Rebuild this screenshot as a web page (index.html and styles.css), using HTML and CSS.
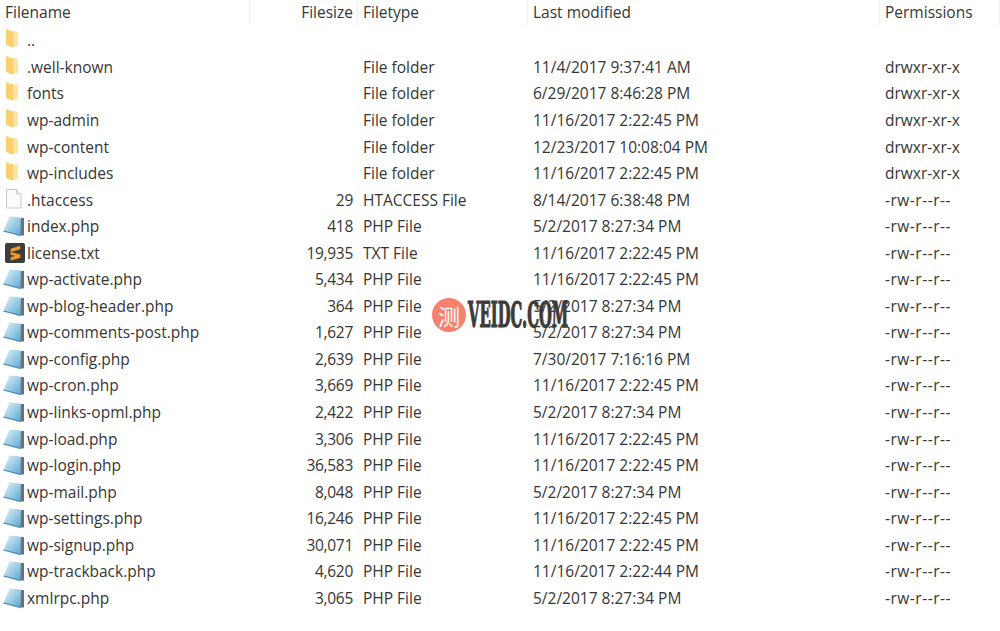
FILE: index.html
```html
<!DOCTYPE html>
<html>
<head>
  <title>Site files</title>
  <link rel="stylesheet" href="styles.css">
</head>
<body>
  <svg class="defs" width="0" height="0">
    <defs>
      <linearGradient id="phpFill" x1="0" y1="0" x2="1" y2="1">
        <stop offset="0" stop-color="#e4f3fa"/>
        <stop offset="1" stop-color="#5aa8d0"/>
      </linearGradient>
      <symbol id="folder" viewBox="0 0 20 20">
        <path d="M1 0l7 2.500h2.500v14l-2.500 2-7-2.500z" fill="#f8d06e"/>
        <path d="M8 2.500h5v14.500h-5z" fill="#fce3a0"/>
      </symbol>
      <symbol id="file" viewBox="0 0 20 20">
        <path d="M1.500 0.500h10l4.500 4.500v14h-14.500z" fill="#fbfbfb" stroke="#c9c9c9"/>
        <path d="M11.500 0.500v4.500h4.500" fill="#efefef" stroke="#c9c9c9"/>
      </symbol>
      <symbol id="php" viewBox="0 0 24 20">
        <path d="M17 2h4v17.500h-4z" fill="#6a717b"/>
        <path d="M6.500 0.500l11.500 1-0.500 18-17-4.500z" fill="url(#phpFill)"/>
        <path d="M0.500 15l17 4.500" fill="none" stroke="#3b87b5" stroke-width="1.200"/>
      </symbol>
      <symbol id="sublime" viewBox="0 0 21 21">
        <rect width="21" height="21" rx="2" fill="#3d3d3d"/>
        <path d="M16 3v3.500l-10 3v-3.500zM6 9.500l10 2.500v3.500l-10 3v-3.500l5-1.500-5-1z" fill="#f39a1f"/>
      </symbol>
    </defs>
  </svg>

  <div class="listing">
    <span class="sort-arrow"></span>

    <div class="row head">
      <span class="cell name">Filename</span>
      <span class="cell size">Filesize</span>
      <span class="cell type">Filetype</span>
      <span class="cell date">Last modified</span>
      <span class="cell perm">Permissions</span>
    </div>

    <div class="row"><span class="cell name"><svg class="icon"><use href="#folder"/></svg>..</span><span class="cell size"></span><span class="cell type"></span><span class="cell date"></span><span class="cell perm"></span></div>
    <div class="row"><span class="cell name"><svg class="icon"><use href="#folder"/></svg>.well-known</span><span class="cell size"></span><span class="cell type">File folder</span><span class="cell date">11/4/2017 9:37:41 AM</span><span class="cell perm">drwxr-xr-x</span></div>
    <div class="row"><span class="cell name"><svg class="icon"><use href="#folder"/></svg>fonts</span><span class="cell size"></span><span class="cell type">File folder</span><span class="cell date">6/29/2017 8:46:28 PM</span><span class="cell perm">drwxr-xr-x</span></div>
    <div class="row"><span class="cell name"><svg class="icon"><use href="#folder"/></svg>wp-admin</span><span class="cell size"></span><span class="cell type">File folder</span><span class="cell date">11/16/2017 2:22:45 PM</span><span class="cell perm">drwxr-xr-x</span></div>
    <div class="row"><span class="cell name"><svg class="icon"><use href="#folder"/></svg>wp-content</span><span class="cell size"></span><span class="cell type">File folder</span><span class="cell date">12/23/2017 10:08:04 PM</span><span class="cell perm">drwxr-xr-x</span></div>
    <div class="row"><span class="cell name"><svg class="icon"><use href="#folder"/></svg>wp-includes</span><span class="cell size"></span><span class="cell type">File folder</span><span class="cell date">11/16/2017 2:22:45 PM</span><span class="cell perm">drwxr-xr-x</span></div>
    <div class="row"><span class="cell name"><svg class="icon"><use href="#file"/></svg>.htaccess</span><span class="cell size">29</span><span class="cell type">HTACCESS File</span><span class="cell date">8/14/2017 6:38:48 PM</span><span class="cell perm file">-rw-r--r--</span></div>
    <div class="row"><span class="cell name"><svg class="icon wide"><use href="#php"/></svg>index.php</span><span class="cell size">418</span><span class="cell type">PHP File</span><span class="cell date">5/2/2017 8:27:34 PM</span><span class="cell perm file">-rw-r--r--</span></div>
    <div class="row"><span class="cell name"><svg class="icon wide"><use href="#sublime"/></svg>license.txt</span><span class="cell size">19,935</span><span class="cell type">TXT File</span><span class="cell date">11/16/2017 2:22:45 PM</span><span class="cell perm file">-rw-r--r--</span></div>
    <div class="row"><span class="cell name"><svg class="icon wide"><use href="#php"/></svg>wp-activate.php</span><span class="cell size">5,434</span><span class="cell type">PHP File</span><span class="cell date">11/16/2017 2:22:45 PM</span><span class="cell perm file">-rw-r--r--</span></div>
    <div class="row"><span class="cell name"><svg class="icon wide"><use href="#php"/></svg>wp-blog-header.php</span><span class="cell size">364</span><span class="cell type">PHP File</span><span class="cell date">5/2/2017 8:27:34 PM</span><span class="cell perm file">-rw-r--r--</span></div>
    <div class="row"><span class="cell name"><svg class="icon wide"><use href="#php"/></svg>wp-comments-post.php</span><span class="cell size">1,627</span><span class="cell type">PHP File</span><span class="cell date">5/2/2017 8:27:34 PM</span><span class="cell perm file">-rw-r--r--</span></div>
    <div class="row"><span class="cell name"><svg class="icon wide"><use href="#php"/></svg>wp-config.php</span><span class="cell size">2,639</span><span class="cell type">PHP File</span><span class="cell date">7/30/2017 7:16:16 PM</span><span class="cell perm file">-rw-r--r--</span></div>
    <div class="row"><span class="cell name"><svg class="icon wide"><use href="#php"/></svg>wp-cron.php</span><span class="cell size">3,669</span><span class="cell type">PHP File</span><span class="cell date">11/16/2017 2:22:45 PM</span><span class="cell perm file">-rw-r--r--</span></div>
    <div class="row"><span class="cell name"><svg class="icon wide"><use href="#php"/></svg>wp-links-opml.php</span><span class="cell size">2,422</span><span class="cell type">PHP File</span><span class="cell date">5/2/2017 8:27:34 PM</span><span class="cell perm file">-rw-r--r--</span></div>
    <div class="row"><span class="cell name"><svg class="icon wide"><use href="#php"/></svg>wp-load.php</span><span class="cell size">3,306</span><span class="cell type">PHP File</span><span class="cell date">11/16/2017 2:22:45 PM</span><span class="cell perm file">-rw-r--r--</span></div>
    <div class="row"><span class="cell name"><svg class="icon wide"><use href="#php"/></svg>wp-login.php</span><span class="cell size">36,583</span><span class="cell type">PHP File</span><span class="cell date">11/16/2017 2:22:45 PM</span><span class="cell perm file">-rw-r--r--</span></div>
    <div class="row"><span class="cell name"><svg class="icon wide"><use href="#php"/></svg>wp-mail.php</span><span class="cell size">8,048</span><span class="cell type">PHP File</span><span class="cell date">5/2/2017 8:27:34 PM</span><span class="cell perm file">-rw-r--r--</span></div>
    <div class="row"><span class="cell name"><svg class="icon wide"><use href="#php"/></svg>wp-settings.php</span><span class="cell size">16,246</span><span class="cell type">PHP File</span><span class="cell date">11/16/2017 2:22:45 PM</span><span class="cell perm file">-rw-r--r--</span></div>
    <div class="row"><span class="cell name"><svg class="icon wide"><use href="#php"/></svg>wp-signup.php</span><span class="cell size">30,071</span><span class="cell type">PHP File</span><span class="cell date">11/16/2017 2:22:45 PM</span><span class="cell perm file">-rw-r--r--</span></div>
    <div class="row"><span class="cell name"><svg class="icon wide"><use href="#php"/></svg>wp-trackback.php</span><span class="cell size">4,620</span><span class="cell type">PHP File</span><span class="cell date">11/16/2017 2:22:44 PM</span><span class="cell perm file">-rw-r--r--</span></div>
    <div class="row"><span class="cell name"><svg class="icon wide"><use href="#php"/></svg>xmlrpc.php</span><span class="cell size">3,065</span><span class="cell type">PHP File</span><span class="cell date">5/2/2017 8:27:34 PM</span><span class="cell perm file">-rw-r--r--</span></div>

    <div class="watermark">
      <span class="wm-badge">测</span>
      <span class="wm-text">VEIDC.COM</span>
    </div>
  </div>
</body>
</html>
```

FILE: styles.css
```css
body {
  margin: 0;
  background: #ffffff;
  color: #363636;
  font-family: "Open Sans", "Noto Sans", sans-serif;
  font-size: 15.5px;
}

.defs {
  position: absolute;
}

.listing {
  position: relative;
  width: 1000px;
  height: 631px;
  overflow: hidden;
}

.row {
  display: grid;
  grid-template-columns: 250px 108px 170px 352px 120px;
  height: 26.55px;
  align-items: center;
  white-space: nowrap;
}

.head {
  height: 27.1px;
  align-items: start;
}

.cell {
  display: flex;
  align-items: center;
  padding-left: 5px;
}

.head .cell {
  height: 25px;
  padding-bottom: 2px;
  border-right: 1px solid #f0f0f0;
  box-sizing: border-box;
}

.size {
  justify-content: flex-end;
  padding: 0 5px 0 0;
  letter-spacing: -0.3px;
}

.head .size {
  padding: 0 4px 2px 0;
  letter-spacing: 0;
}

.perm.file {
  letter-spacing: 0.5px;
}

.icon {
  width: 20px;
  height: 20px;
  margin: -2px 2px 0 0;
  flex: none;
}

.icon.wide {
  width: 24px;
  margin: 0 0 0 -2px;
}

.sort-arrow {
  position: absolute;
  top: -5px;
  left: 122px;
  width: 6px;
  height: 6px;
  border-top: 1px solid #9a9a9a;
  border-left: 1px solid #9a9a9a;
  transform: rotate(45deg);
}

.watermark {
  position: absolute;
  top: 298px;
  left: 432px;
  display: flex;
  align-items: center;
  gap: 2px;
}

.wm-badge {
  width: 34px;
  height: 34px;
  border-radius: 50%;
  background: #f7806f;
  color: #ffffff;
  font-family: "Noto Sans CJK SC", sans-serif;
  font-size: 22px;
  line-height: 34px;
  text-align: center;
}

.wm-text {
  color: #3d3a3a;
  font-family: "DejaVu Serif", serif;
  font-stretch: condensed;
  font-weight: 700;
  font-size: 35px;
  line-height: 34px;
  -webkit-text-stroke: 1.2px #3d3a3a;
  transform: scaleX(0.47);
  transform-origin: left center;
}
```
